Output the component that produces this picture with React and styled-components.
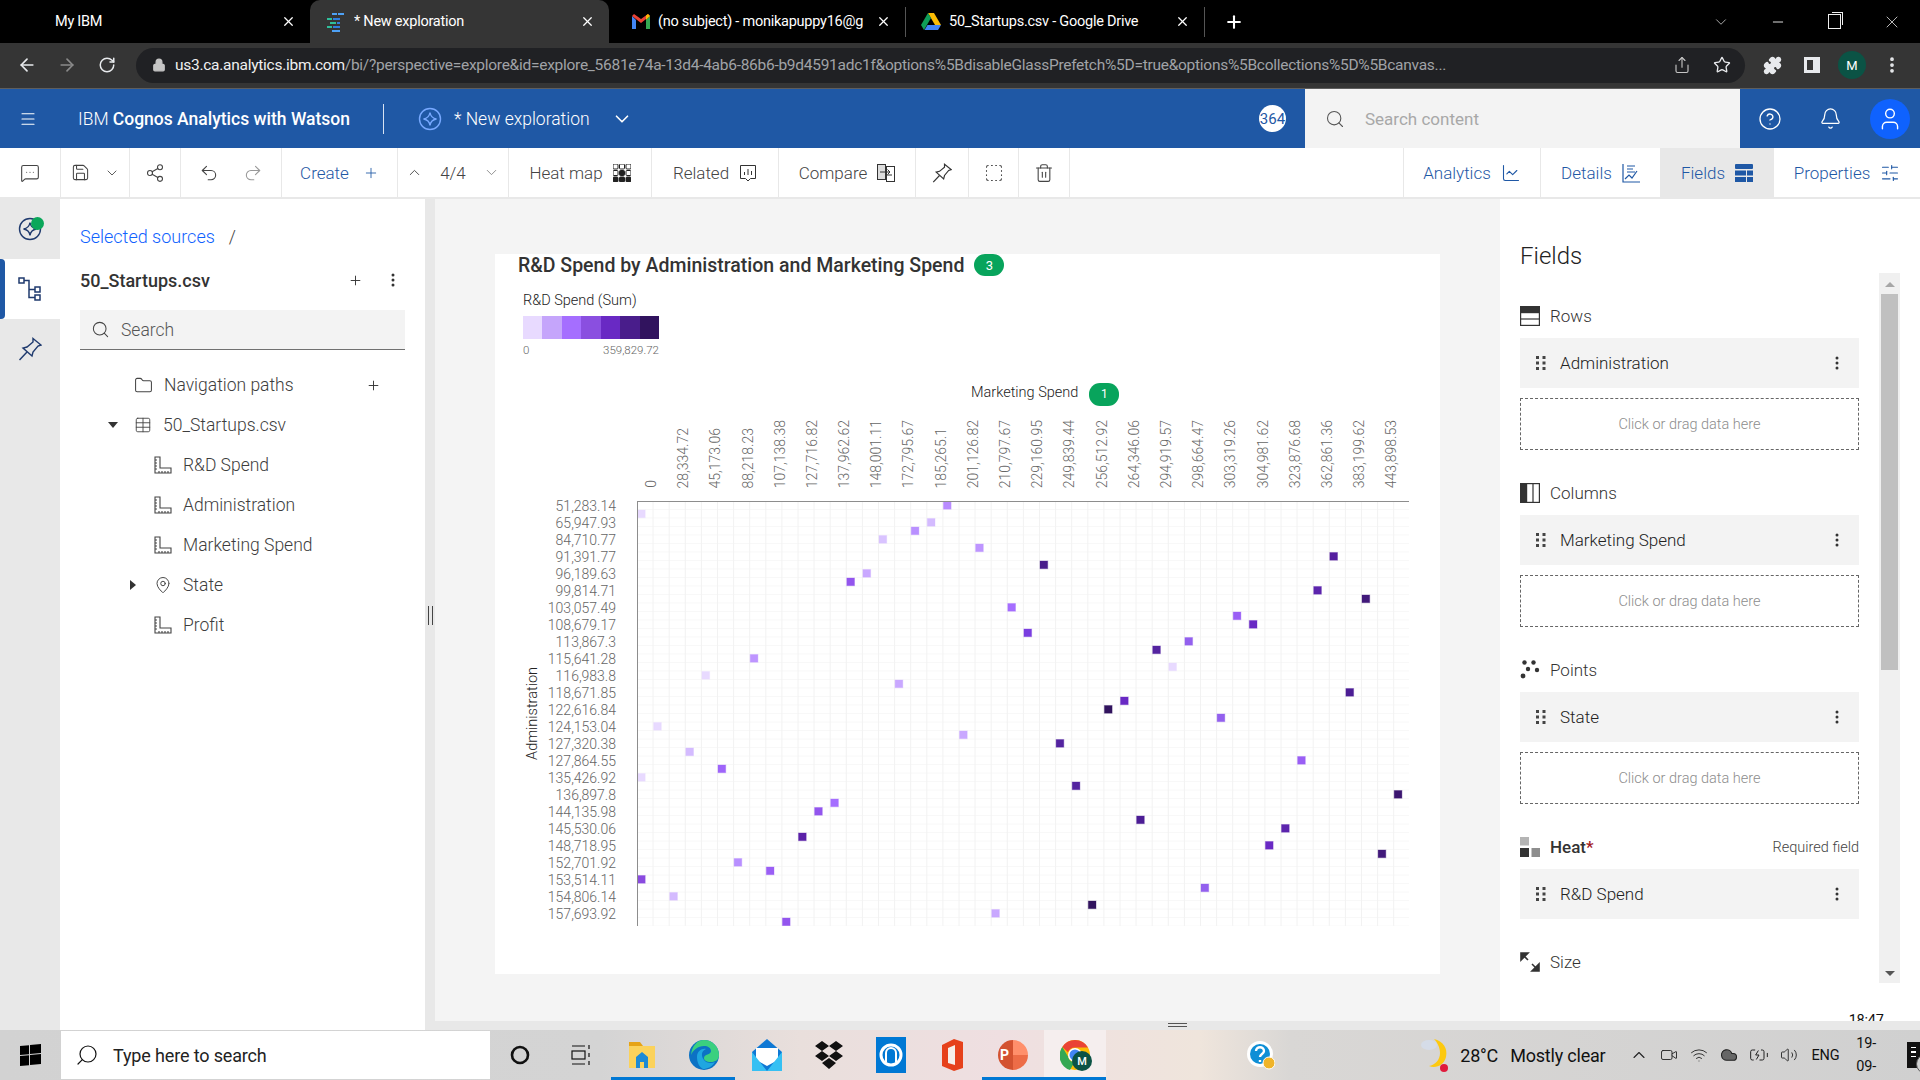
import styled, { createGlobalStyle } from "styled-components";
import {
  ArrowLeft, ArrowRight, Bell, ChartLine, ChevronDown, ChevronUp, CircleHelp, EllipsisVertical,
  Folder, Lock, MapPin, Menu, MessageSquareMore, Minus, Pin, Plus, Puzzle, Redo2, RotateCw, Save,
  Search, Share, Share2, SlidersHorizontal, SquareDashed, Star, Table, Trash2, Undo2, User, Wifi,
  Volume2, Video, Cloud, BatteryCharging, X,
} from "lucide-react";

const GlobalStyle = createGlobalStyle`
  html, body { margin: 0; padding: 0; background: #fff; }
  body { width: 1920px; height: 1080px; overflow: hidden; font-family: Roboto, "Liberation Sans", sans-serif; }
  * { box-sizing: border-box; }
`;

const Page = styled.div`
  width: 1920px;
  height: 1080px;
  display: flex;
  flex-direction: column;
`;

/* ---------- browser chrome ---------- */
const TabStrip = styled.div`
  height: 43px;
  background: #000;
  display: flex;
  align-items: center;
  color: #fff;
  font-size: 14.5px;
  letter-spacing: -0.25px;
`;
const Tab = styled.div`
  width: ${(p) => p.$w}px;
  height: ${(p) => (p.$active ? "43px" : "30px")};
  display: flex;
  align-items: center;
  padding: 0 14px 0 ${(p) => p.$pad}px;
  gap: 8px;
  background: ${(p) => (p.$active ? "#353535" : "transparent")};
  border-radius: ${(p) => (p.$active ? "10px 10px 0 0" : "0")};
  border-right: ${(p) => (p.$sep ? "1px solid #555" : "none")};
`;
const TabLabel = styled.span`
  flex: 1;
  white-space: nowrap;
  overflow: hidden;
`;
const TabPlus = styled.div`
  width: 58px;
  display: flex;
  justify-content: center;
`;
const WindowButtons = styled.div`
  margin-left: auto;
  display: flex;
  align-items: center;
  padding-right: 0;
`;
const WindowButton = styled.div`
  width: 57px;
  display: flex;
  justify-content: center;
  color: #ddd;
`;
const RestoreIcon = styled.div`
  width: 13px;
  height: 15px;
  border: 1px solid #eee;
  box-shadow: 2px -2px 0 -1px #000, 3px -3px 0 -1px #eee;
`;
const ChromeBar = styled.div`
  height: 46px;
  background: #353535;
  border-bottom: 1px solid #5e5e5e;
  display: flex;
  align-items: center;
  padding-left: 7px;
  padding-bottom: 1px;
`;
const NavSlot = styled.div`
  width: ${(p) => p.$w || 40}px;
  height: 34px;
  flex: none;
  display: flex;
  align-items: center;
  justify-content: center;
  color: ${(p) => p.$color || "#e8eaed"};
`;
const Omnibox = styled.div`
  width: 1609px;
  height: 35px;
  margin: 0 7px 0 9px;
  flex: none;
  border-radius: 18px;
  background: #202124;
  display: flex;
  align-items: center;
  padding: 0 3px 0 16px;
  color: #c6c6c6;
`;
const Url = styled.div`
  flex: 1;
  margin-left: 9px;
  white-space: nowrap;
  overflow: hidden;
  font-size: 15.5px;
  letter-spacing: -0.27px;
  color: #a0a3a7;
  span { color: #f0f0f0; }
`;
const Avatar = styled.div`
  width: 28px;
  height: 28px;
  border-radius: 50%;
  background: #0b5345;
  color: #fff;
  font-size: 13px;
  display: flex;
  align-items: center;
  justify-content: center;
`;

/* ---------- cognos header ---------- */
const AppHeader = styled.div`
  height: 59px;
  background: #1f58a5;
  color: #fff;
  display: flex;
  align-items: center;
`;
const HeaderSlot = styled.div`
  width: ${(p) => p.$w}px;
  height: 100%;
  flex: none;
  display: flex;
  align-items: center;
  justify-content: center;
`;
const AppTitle = styled.div`
  width: 305px;
  margin-left: 22px;
  flex: none;
  font-size: 17.5px;
  font-weight: 300;
  white-space: nowrap;
  b { font-weight: 500; }
`;
const HeaderDivider = styled.div`
  width: 1px;
  height: 30px;
  background: #d6e2f3;
  margin-right: 34px;
`;
const ExplorationName = styled.div`
  margin: 0 21px 0 12px;
  font-size: 17.5px;
  font-weight: 300;
  white-space: nowrap;
`;
const CountBadge = styled.div`
  width: 27px;
  height: 27px;
  margin: 0 19px 0 auto;
  border-radius: 50%;
  background: #fff;
  color: #1f58a5;
  font-size: 15px;
  overflow: hidden;
  display: flex;
  align-items: center;
  justify-content: center;
`;
const ContentSearch = styled.div`
  width: 435px;
  height: 100%;
  flex: none;
  background: #f3f3f3;
  color: #a8a8a8;
  font-size: 17px;
  display: flex;
  align-items: center;
  gap: 20px;
  padding-left: 20px;
`;
const UserCircle = styled.div`
  width: 40px;
  height: 40px;
  border-radius: 50%;
  background: #0f62fe;
  display: flex;
  align-items: center;
  justify-content: center;
`;

/* ---------- toolbar ---------- */
const Toolbar = styled.div`
  height: 51px;
  background: #fff;
  border-bottom: 2px solid #e8e8e8;
  display: flex;
  color: #444;
  font-size: 17px;
  font-weight: 300;
`;
const ToolCell = styled.div`
  width: ${(p) => p.$w}px;
  flex: none;
  display: flex;
  align-items: center;
  justify-content: ${(p) => p.$justify || "center"};
  gap: ${(p) => p.$gap ?? 10}px;
  padding: ${(p) => p.$pad || "0"};
  border-right: ${(p) => (p.$plain ? "none" : "1px solid #e8e8e8")};
  background: ${(p) => (p.$active ? "#e8e8e8" : "transparent")};
  color: ${(p) => (p.$blue ? "#1f58a5" : "inherit")};
`;
const ToolSpacer = styled.div`
  flex: 1;
  border-right: 1px solid #e8e8e8;
`;

/* ---------- main area ---------- */
const Main = styled.div`
  flex: 1;
  min-height: 0;
  display: flex;
`;
const Rail = styled.div`
  width: 60px;
  flex: none;
  background: #e8e8e8;
`;
const RailItem = styled.div`
  position: relative;
  height: 60px;
  display: flex;
  align-items: center;
  justify-content: center;
  background: ${(p) => (p.$active ? "#fff" : "transparent")};
  padding-top: ${(p) => (p.$first ? "0" : "0")};
`;
const RailMarker = styled.div`
  position: absolute;
  left: 0;
  top: 0;
  bottom: 0;
  width: 5px;
  background: #1f58a5;
  border-radius: 0 4px 4px 0;
`;
const GreenDot = styled.div`
  position: absolute;
  left: 31px;
  top: 18px;
  width: 13px;
  height: 13px;
  border-radius: 50%;
  background: #0aa75a;
`;
const SourcePanel = styled.div`
  width: 365px;
  flex: none;
  background: #fff;
  padding: 24px 20px 0;
  color: #3d3d3d;
`;
const Breadcrumb = styled.div`
  height: 26px;
  display: flex;
  align-items: center;
  gap: 14px;
  font-size: 18px;
  font-weight: 300;
  color: #0f62fe;
  span { color: #444; }
`;
const SourceHead = styled.div`
  height: 40px;
  margin-top: 11px;
  display: flex;
  align-items: center;
  font-size: 18px;
  font-weight: 500;
  color: #333;
`;
const SourceActions = styled.div`
  margin-left: auto;
  display: flex;
  align-items: center;
  gap: 28px;
  margin-right: 10px;
`;
const SourceSearch = styled.div`
  height: 40px;
  margin-top: 10px;
  width: 325px;
  background: #f3f3f3;
  border-bottom: 1px solid #707070;
  display: flex;
  align-items: center;
  gap: 11px;
  padding-left: 11px;
  font-size: 17.5px;
  font-weight: 300;
  color: #555;
`;
const Tree = styled.div`
  margin-top: 15px;
  font-size: 17.5px;
  font-weight: 300;
`;
const TreeRow = styled.div`
  height: 40px;
  display: flex;
  align-items: center;
  gap: 11px;
  padding-left: ${(p) => p.$indent}px;
`;
const Caret = styled.div`
  width: 0;
  height: 0;
  margin-left: ${(p) => p.$gap}px;
  margin-right: ${(p) => p.$after}px;
  border-style: solid;
  ${(p) =>
    p.$open
      ? "border-width: 6px 5px 0 5px; border-color: #333 transparent transparent transparent;"
      : "border-width: 5px 0 5px 6px; border-color: transparent transparent transparent #333;"}
`;
const TreeAdd = styled.div`
  margin-left: auto;
  margin-right: 24px;
  display: flex;
`;
const Gutter = styled.div`
  position: relative;
  width: 10px;
  flex: none;
  background: #e8e8e8;
`;
const VerticalGrip = styled.div`
  position: absolute;
  left: 3px;
  top: 407px;
  width: 5px;
  height: 19px;
  border-left: 1px solid #444;
  border-right: 1px solid #444;
`;
const WorkColumn = styled.div`
  flex: 1;
  min-width: 0;
  display: flex;
  flex-direction: column;
`;
const WorkRow = styled.div`
  flex: 1;
  min-height: 0;
  display: flex;
`;
const BottomBar = styled.div`
  position: relative;
  height: 9px;
  background: #e8e8e8;
`;
const HorizontalGrip = styled.div`
  position: absolute;
  left: 733px;
  top: 2px;
  width: 19px;
  height: 4px;
  border-top: 1px solid #555;
  border-bottom: 1px solid #555;
`;
const Canvas = styled.div`
  width: 1065px;
  flex: none;
  background: #f4f4f4;
  padding: 41px 0 0 60px;
`;

/* ---------- chart card ---------- */
const ChartCard = styled.div`
  width: 945px;
  height: 720px;
  background: #fff;
`;
const ChartTitle = styled.div`
  height: 22px;
  margin: 14px 0 0 23px;
  padding-top: 0;
  display: flex;
  align-items: center;
  gap: 10px;
  font-size: 19.5px;
  font-weight: 500;
  color: #333;
  white-space: nowrap;
`;
const Pill = styled.div`
  width: 30px;
  height: 22px;
  border-radius: 11px;
  background: #08a45c;
  color: #fff;
  font-size: 13px;
  font-weight: 400;
  display: flex;
  align-items: center;
  justify-content: center;
  flex: none;
`;
const Legend = styled.div`
  width: 136px;
  margin: 16px 0 0 28px;
`;
const LegendLabel = styled.div`
  height: 18px;
  line-height: 18px;
  font-size: 14.5px;
  font-weight: 300;
  color: #222;
  white-space: nowrap;
`;
const LegendBar = styled.div`
  height: 23px;
  margin-top: 6px;
  display: flex;
`;
const LegendStep = styled.div`
  flex: 1;
  background: ${(p) => p.$color};
`;
const LegendRange = styled.div`
  margin-top: 4px;
  height: 14px;
  display: flex;
  justify-content: space-between;
  font-size: 11.5px;
  font-weight: 300;
  color: #666;
`;
const AxisTitle = styled.div`
  height: 22px;
  margin: 24px 0 0 476px;
  display: flex;
  align-items: center;
  gap: 11px;
  font-size: 14.5px;
  font-weight: 300;
  color: #222;
  white-space: nowrap;
  ${Pill} { margin-top: 4px; font-size: 12px; height: 23px; }
`;
const ColumnLabels = styled.div`
  height: 85px;
  padding-left: 146.7px;
  display: flex;
  align-items: flex-end;
  margin-bottom: 13px;
`;
const ColumnLabel = styled.div`
  width: 32.2px;
  flex: none;
  padding-left: 1.3px;
  display: flex;
  justify-content: flex-start;
  span {
    writing-mode: vertical-rl;
    transform: rotate(180deg);
    width: 16px;
    line-height: 16px;
    font-size: 14px;
    font-weight: 300;
    color: #666;
    white-space: nowrap;
  }
`;
const PlotRow = styled.div`
  display: flex;
  align-items: flex-start;
  height: 425px;
`;
const SideTitle = styled.div`
  width: 18px;
  margin-left: 28px;
  height: 425px;
  display: flex;
  align-items: center;
  justify-content: center;
  span {
    writing-mode: vertical-rl;
    transform: rotate(180deg);
    font-size: 14.5px;
    font-weight: 300;
    color: #222;
    white-space: nowrap;
  }
`;
const RowLabels = styled.div`
  width: 75px;
  margin: -3.5px 20.7px 0 0;
  flex: none;
`;
const RowLabel = styled.div`
  height: 17px;
  line-height: 17px;
  text-align: right;
  font-size: 14px;
  font-weight: 300;
  color: #666;
`;
const Plot = styled.svg`
  flex: none;
  display: block;
`;

/* ---------- fields panel ---------- */
const FieldsPanel = styled.div`
  width: 420px;
  flex: none;
  background: #fff;
  padding: 40px 20px 0;
`;
const FieldsTitle = styled.div`
  height: 34px;
  line-height: 34px;
  font-size: 24px;
  font-weight: 300;
  color: #222;
`;
const FieldsBody = styled.div`
  display: flex;
  gap: 20px;
  height: 710px;
`;
const FieldsList = styled.div`
  width: 339px;
  flex: none;
  padding-top: 21px;
`;
const Section = styled.div`
  margin-bottom: 21px;
`;
const SectionHead = styled.div`
  height: 44px;
  padding-bottom: 0;
  display: flex;
  align-items: center;
  gap: 10px;
  font-size: 17px;
  font-weight: 300;
  color: #333;
  b { font-weight: 500; }
  i { font-style: normal; color: #a2191f; font-weight: 500; }
`;
const RequiredNote = styled.span`
  margin-left: auto;
  font-size: 14.5px;
  color: #444;
`;
const FieldItem = styled.div`
  height: 50px;
  background: #f3f3f3;
  display: flex;
  align-items: center;
  gap: 14px;
  padding: 0 20px 0 16px;
  font-size: 17px;
  font-weight: 300;
  color: #222;
`;
const FieldMenu = styled.div`
  margin-left: auto;
  display: flex;
`;
const DropZone = styled.div`
  height: 52px;
  margin-top: 10px;
  border: 1px dashed #666;
  display: flex;
  align-items: center;
  justify-content: center;
  font-size: 14.5px;
  font-weight: 300;
  color: #8d8d8d;
`;
const Scrollbar = styled.div`
  width: 21px;
  height: 710px;
  flex: none;
  background: #f0f0f0;
  display: flex;
  flex-direction: column;
  align-items: center;
`;
const ScrollArrow = styled.div`
  width: 0;
  height: 0;
  margin: ${(p) => (p.$up ? "9px 0 7px" : "auto 0 7px")};
  border-style: solid;
  ${(p) =>
    p.$up
      ? "border-width: 0 5px 5px 5px; border-color: transparent transparent #a6a6a6 transparent;"
      : "border-width: 5px 5px 0 5px; border-color: #555 transparent transparent transparent;"}
`;
const ScrollThumb = styled.div`
  width: 17px;
  height: 376px;
  background: #c0c0c0;
`;

/* ---------- taskbar ---------- */
const Taskbar = styled.div`
  height: 50px;
  flex: none;
  display: flex;
  align-items: center;
  color: #111;
  background: linear-gradient(90deg, #d2d2d2 0, #d4d4d4 600px, #e9dfdc 800px, #efdfe1 1000px, #efe5dc 1200px, #d9d7d5 1290px, #d0d0d0 100%);
`;
const StartSlot = styled.div`
  width: 61px;
  flex: none;
  display: flex;
  justify-content: center;
`;
const WindowsLogo = styled.div`
  display: grid;
  grid-template-columns: 9px 11px;
  grid-template-rows: 9px 10px;
  gap: 1px;
  transform: skewY(-6deg);
  div { background: #000; }
`;
const TaskSearch = styled.div`
  width: 429px;
  height: 48px;
  flex: none;
  background: #fff;
  display: flex;
  align-items: center;
  gap: 14px;
  padding-left: 14px;
  font-size: 18px;
  letter-spacing: -0.15px;
  color: #222;
`;
const TaskApps = styled.div`
  display: flex;
  height: 100%;
`;
const TaskApp = styled.div`
  width: ${(p) => p.$w || 61.5}px;
  height: 50px;
  flex: none;
  display: flex;
  align-items: center;
  justify-content: center;
  background: ${(p) => (p.$active ? "#f5eeee" : "transparent")};
  box-shadow: ${(p) => (p.$open ? "inset 0 -3px 0 #0078d4" : "none")};
  position: relative;
`;
const PptBadge = styled.div`
  width: 30px;
  height: 30px;
  border-radius: 50%;
  background: conic-gradient(#ff8f6b 0 25%, #ed6c47 25% 50%, #d35230 50% 100%);
  color: #fff;
  font-weight: 700;
  font-size: 14px;
  display: flex;
  align-items: center;
  padding-left: 2px;
`;
const ChromeBadge = styled.div`
  position: absolute;
  left: 28px;
  top: 21px;
  width: 20px;
  height: 20px;
  border-radius: 50%;
  background: #0b5345;
  color: #fff;
  font-size: 11px;
  font-weight: 500;
  display: flex;
  align-items: center;
  justify-content: center;
`;
const TraySpace = styled.div`
  display: flex;
  align-items: center;
  height: 100%;
  font-size: 18px;
  letter-spacing: -0.2px;
  margin-left: 141px;
`;
const WeatherText = styled.div`
  margin-left: 10px;
  white-space: nowrap;
  display: flex;
  gap: 12px;
`;
const TrayIcons = styled.div`
  display: flex;
  align-items: center;
  margin-left: 18px;
`;
const TrayIcon = styled.div`
  width: 30px;
  display: flex;
  justify-content: center;
  color: #222;
`;
const Lang = styled.div`
  margin-left: 8px;
  font-size: 14.5px;
  letter-spacing: -0.2px;
`;
const Clock = styled.div`
  width: 90px;
  margin-left: 8px;
  text-align: center;
  font-size: 14.5px;
  line-height: 23px;
  letter-spacing: -0.2px;
`;
const Notify = styled.div`
  position: relative;
  margin-left: 22px;
  width: 20px;
  height: 26px;
  background: #111;
  display: flex;
  flex-direction: column;
  justify-content: center;
  gap: 3px;
  padding: 0 4px 6px;
  i { display: block; height: 1.5px; background: #fff; }
`;
const NotifyCount = styled.div`
  position: absolute;
  left: 9px;
  top: 12px;
  width: 20px;
  height: 20px;
  border-radius: 50%;
  background: #d2d2d2;
  border: 1px solid #555;
  font-size: 12.5px;
  display: flex;
  align-items: center;
  justify-content: center;
`;

/* ---------- small drawn icons ---------- */
const NAVY = "#1f3a6e";

const CognosFavicon = () => (
  <svg width="20" height="20" viewBox="0 0 20 20">
    <rect x="6" y="1" width="5" height="2" fill="#4ea1f5" />
    <rect x="12" y="1" width="6" height="2" fill="#4ea1f5" />
    <rect x="1" y="6" width="5" height="2" fill="#2fbf9b" />
    <rect x="7" y="6" width="7" height="2" fill="#2f7fe0" />
    <rect x="4" y="10" width="6" height="2" fill="#2fbf9b" />
    <rect x="11" y="10" width="3" height="2" fill="#2f7fe0" />
    <rect x="1" y="14" width="5" height="2" fill="#2fbf9b" />
    <rect x="7" y="14" width="7" height="2" fill="#2f7fe0" />
    <rect x="6" y="18" width="8" height="2" fill="#4ea1f5" />
  </svg>
);
const GmailIcon = () => (
  <svg width="18" height="15" viewBox="0 0 18 15">
    <path d="M0 2v13h4V6z" fill="#4285f4" />
    <path d="M14 6v9h4V2z" fill="#34a853" />
    <path d="M0 2l9 7 9-7-2-2-7 5-7-5z" fill="#ea4335" />
    <path d="M14 6l4-4-2-2-2 1.5z" fill="#fbbc04" />
  </svg>
);
const DriveIcon = () => (
  <svg width="20" height="18" viewBox="0 0 20 18">
    <path d="M7 0h6l7 12h-6z" fill="#fbbc04" />
    <path d="M7 0L0 12l3 5 7-12z" fill="#0f9d58" />
    <path d="M6.500 12H20l-3 5H3.500z" fill="#4285f4" />
  </svg>
);
const StarLogo = ({ color, size = 24 }) => (
  <svg width={size} height={size} viewBox="0 0 24 24" fill="none" stroke={color} strokeWidth="1.4">
    <circle cx="12" cy="12" r="10.5" />
    <path d="M12 5.500c.6 4 2.500 5.900 6.500 6.500-4 .6-5.900 2.500-6.500 6.500-.6-4-2.500-5.900-6.500-6.500 4-.6 5.900-2.500 6.500-6.500z" />
  </svg>
);
const HeatGridIcon = () => (
  <svg width="18" height="18" viewBox="0 0 18 18">
    {[0, 1, 2].flatMap((r) =>
      [0, 1, 2].map((c) => (
        <rect key={`${r}${c}`} x={c * 6.5} y={r * 6.5} width="5" height="5" rx="1" fill={r === 2 || (r === 1 && c === 1) ? "#222" : "#fff"} stroke="#222" />
      ))
    )}
  </svg>
);
const RelatedIcon = () => (
  <svg width="18" height="18" viewBox="0 0 18 18" fill="none" stroke="#333">
    <path d="M1.500 1.500h15v13h-5l-2.500 2.500-2.500-2.500h-5z" />
    <path d="M5.500 11V8M9 11V5M12.500 11V7" />
  </svg>
);
const CompareIcon = () => (
  <svg width="18" height="20" viewBox="0 0 18 20" fill="none" stroke="#333">
    <rect x="0.500" y="1.500" width="8" height="15" fill="#ddd" />
    <rect x="9.500" y="3.500" width="8" height="15" />
    <path d="M3 9h10M10.500 6.500L13 9l-2.500 2.500M15 12H8" />
  </svg>
);
const DetailsIcon = () => (
  <svg width="18" height="20" viewBox="0 0 18 20" fill="none" stroke="#1f58a5" strokeWidth="1.2">
    <path d="M1 1v18h17" />
    <path d="M5 3h8M5 6h6M5 9h8M3 16l4-4 3 3 5-7" />
  </svg>
);
const FieldsIcon = () => (
  <svg width="18" height="18" viewBox="0 0 18 18" fill="#1f58a5">
    <rect x="0" y="0" width="18" height="5" rx="1" />
    <rect x="0" y="6.500" width="11" height="5" />
    <rect x="12" y="6.500" width="6" height="5" />
    <rect x="0" y="13" width="11" height="5" />
    <rect x="12" y="13" width="6" height="5" />
  </svg>
);
const TreeIcon = () => (
  <svg width="24" height="24" viewBox="0 0 24 24" fill="none" stroke={NAVY} strokeWidth="1.5">
    <rect x="1" y="1" width="5" height="5" />
    <rect x="17" y="10" width="5" height="5" />
    <rect x="17" y="18" width="5" height="5" />
    <path d="M6 3.500h5v17h6M11 12.500h6" />
  </svg>
);
const PinIcon = ({ color = NAVY, size = 24 }) => (
  <svg width={size} height={size} viewBox="0 0 24 24" fill="none" stroke={color} strokeWidth="1.4">
    <path d="M15 1.500L23 8l-3 1-5 6-1 4-9-8 4-1 6-5z" />
    <path d="M9 15L1.500 23" />
  </svg>
);
const MeasureIcon = () => (
  <svg width="18" height="18" viewBox="0 0 18 18" fill="none" stroke="#444" strokeWidth="1.1">
    <path d="M1 1h5v11h11v5H1z" />
    <path d="M1 4h2M1 7h2M1 10h2M1 13h2M5 17v-2M8 17v-2M11 17v-2M14 17v-2" />
  </svg>
);
const RowsIcon = () => (
  <svg width="20" height="20" viewBox="0 0 20 20" fill="none" stroke="#333" strokeWidth="1.2">
    <rect x="0.600" y="0.600" width="18.800" height="18.800" />
    <rect x="0.600" y="0.600" width="18.800" height="6" fill="#333" />
    <path d="M1 13h18" />
  </svg>
);
const ColumnsIcon = () => (
  <svg width="20" height="20" viewBox="0 0 20 20" fill="none" stroke="#333" strokeWidth="1.2">
    <rect x="0.600" y="0.600" width="18.800" height="18.800" />
    <rect x="0.600" y="0.600" width="6" height="18.800" fill="#333" />
    <path d="M13 1v18" />
  </svg>
);
const PointsIcon = () => (
  <svg width="20" height="20" viewBox="0 0 20 20" fill="#333">
    <circle cx="4.500" cy="2.500" r="2.200" /><circle cx="13.500" cy="2.500" r="2.200" />
    <circle cx="8" cy="9" r="2.200" /><circle cx="17" cy="10" r="2.200" />
    <circle cx="3" cy="16" r="2.400" />
  </svg>
);
const HeatIcon = () => (
  <svg width="20" height="20" viewBox="0 0 20 20">
    <rect x="0" y="0" width="9" height="8.500" fill="#b4b4b4" />
    <rect x="0" y="11" width="9" height="9" fill="#333" />
    <rect x="11.500" y="11" width="8.500" height="9" fill="#8d8d8d" />
  </svg>
);
const SizeIcon = () => (
  <svg width="20" height="20" viewBox="0 0 20 20" fill="none" stroke="#333" strokeWidth="1.6">
    <path d="M1 8V1h7L1 8zM3 3l5 5M12 12l6 6M19 12v7h-7z" fill="#333" />
  </svg>
);
const DragDots = () => (
  <svg width="10" height="14" viewBox="0 0 10 14" fill="#444">
    {[1.500, 7, 12.500].flatMap((y) => [1.500, 8].map((x) => <rect key={`${x}${y}`} x={x - 1.500} y={y - 1.500} width="3" height="3" />))}
  </svg>
);
const Kebab = () => (
  <svg width="4" height="14" viewBox="0 0 4 14" fill="#333">
    <circle cx="2" cy="2" r="1.500" /><circle cx="2" cy="7" r="1.500" /><circle cx="2" cy="12" r="1.500" />
  </svg>
);
const TaskViewIcon = () => (
  <svg width="20" height="22" viewBox="0 0 20 22" fill="none" stroke="#111" strokeWidth="1.200">
    <rect x="1" y="7" width="13" height="8" />
    <path d="M1 2h13M1 20h13M18 1v4M18 9v4M18 17v4" />
  </svg>
);
const ExplorerIcon = () => (
  <svg width="28" height="28" viewBox="0 0 28 28">
    <path d="M1 1h11l3 4H1z" fill="#e6a316" />
    <rect x="1" y="5" width="26" height="22" fill="#fbd25b" />
    <path d="M8 27V16l6-5 6 5v11h-4v-6h-4v6z" fill="#1d8ad6" />
  </svg>
);
const EdgeIcon = () => (
  <svg width="30" height="32" viewBox="0 0 30 32">
    <circle cx="15" cy="16" r="15" fill="#0c72c4" />
    <path d="M15 1a15 15 0 0 1 15 15c0 5-4 7-8 7-5 0-7-2-7-4 0-4 7-3 7-7 0-3-3-5-7-5-6 0-11 4-13 9C3 7 8 1 15 1z" fill="#3bd07f" />
    <path d="M8 18c0-6 5-9 9-8-5 2-5 7-2 11 2 3 7 4 11 2-3 5-8 7-12 7-4-2-6-7-6-12z" fill="#1fa6e0" />
  </svg>
);
const MailIcon = () => (
  <svg width="30" height="34" viewBox="0 0 30 34">
    <path d="M15 1l15 13v19H0V14z" fill="#0f78d4" />
    <path d="M4 10h22v12l-11 6-11-6z" fill="#fff" />
    <path d="M0 14l15 19H0zM30 14L15 33h15z" fill="#36c0f3" />
  </svg>
);
const DropboxIcon = () => (
  <svg width="30" height="30" viewBox="0 0 30 30" fill="#111">
    <path d="M8 1l7 5-7 5-7-5zM22 1l7 5-7 5-7-5zM8 11l7 5-7 5-7-5zM22 11l7 5-7 5-7-5zM15 18l7 5-7 6-7-6z" />
  </svg>
);
const BlueSquareIcon = () => (
  <svg width="30" height="36" viewBox="0 0 30 36">
    <rect width="30" height="36" fill="#0078d4" />
    <circle cx="15" cy="18" r="10" fill="none" stroke="#fff" strokeWidth="3" />
    <path d="M10 25v-9a5 5 0 0 1 10 0v9" fill="none" stroke="#fff" strokeWidth="2" />
  </svg>
);
const OfficeIcon = () => (
  <svg width="24" height="34" viewBox="0 0 24 34">
    <path d="M14 1l9 3v26l-9 3L2 28V7z" fill="#e6411b" />
    <path d="M8 10l7-3v20l-7-2z" fill="#f6efe9" />
  </svg>
);
const ChromeIcon = () => (
  <svg width="30" height="30" viewBox="0 0 30 30">
    <circle cx="15" cy="15" r="15" fill="#fbbc04" />
    <path d="M15 0a15 15 0 0 1 13 7.500H15a7.500 7.500 0 0 0-7 4.800L2.300 7A15 15 0 0 1 15 0z" fill="#ea4335" />
    <path d="M2.300 7l6 10a7.500 7.500 0 0 0 6 5.500L10 30A15 15 0 0 1 2.300 7z" fill="#34a853" />
    <circle cx="15" cy="15" r="7" fill="#fff" /><circle cx="15" cy="15" r="5.500" fill="#4285f4" />
  </svg>
);
const HelpBadgeIcon = () => (
  <svg width="28" height="32" viewBox="0 0 28 32">
    <circle cx="13" cy="15" r="13" fill="#fff" />
    <circle cx="13" cy="15" r="10" fill="#0f8fd6" />
    <path d="M9 12c0-5 8-5 8 0 0 3-4 3-4 6M13 21v2" fill="none" stroke="#fff" strokeWidth="2.400" />
    <circle cx="22" cy="24" r="6" fill="#f0b429" stroke="#fff" />
  </svg>
);
const WeatherIcon = () => (
  <svg width="30" height="38" viewBox="0 0 30 38">
    <path d="M14 3c9 2 14 9 12 18-2 8-10 12-17 9 6-1 11-6 11-13 0-6-3-11-6-14z" fill="#fdc90f" />
    <ellipse cx="9" cy="9" rx="8" ry="5" fill="#d5dce8" />
    <circle cx="24" cy="32" r="4" fill="#e01b3c" />
  </svg>
);

/* ---------- data ---------- */
const LEGEND = ["#e8daff", "#c5a5fb", "#a56eff", "#8a4fe0", "#6929c4", "#491d8b", "#31135e"];

const COLUMN_LABELS = [
  "0", "28,334.72", "45,173.06", "88,218.23", "107,138.38", "127,716.82", "137,962.62", "148,001.11",
  "172,795.67", "185,265.1", "201,126.82", "210,797.67", "229,160.95", "249,839.44", "256,512.92",
  "264,346.06", "294,919.57", "298,664.47", "303,319.26", "304,981.62", "323,876.68", "362,861.36",
  "383,199.62", "443,898.53",
];
const ROW_LABELS = [
  "51,283.14", "65,947.93", "84,710.77", "91,391.77", "96,189.63", "99,814.71", "103,057.49", "108,679.17",
  "113,867.3", "115,641.28", "116,983.8", "118,671.85", "122,616.84", "124,153.04", "127,320.38",
  "127,864.55", "135,426.92", "136,897.8", "144,135.98", "145,530.06", "148,718.95", "152,701.92",
  "153,514.11", "154,806.14", "157,693.92",
];
// col, row, colour
const CELLS = [
  [0, 1, "#e8daff"], [19, 0, "#b98cff"], [18, 2, "#d4bbff"], [17, 3, "#b990ff"], [15, 4, "#d9c3ff"],
  [21, 5, "#be95ff"], [14, 8, "#c9a8ff"], [13, 9, "#9355ee"], [23, 12, "#a56eff"], [7, 18, "#be95ff"],
  [4, 20, "#e8daff"], [16, 21, "#c9a8ff"], [1, 26, "#e8daff"], [20, 27, "#c9a8ff"], [3, 29, "#d4bbff"],
  [5, 31, "#9f65fa"], [0, 32, "#e8daff"], [12, 35, "#a56eff"], [11, 36, "#9355ee"], [10, 39, "#5b21a8"],
  [6, 42, "#b88fff"], [8, 43, "#9a5ff5"], [0, 44, "#8a4be0"], [2, 46, "#d4bbff"], [22, 48, "#c9a8ff"],
  [9, 49, "#9355ee"], [25, 7, "#491d8b"], [24, 15, "#7a3ee0"], [43, 6, "#551f9f"], [42, 10, "#5c25ad"],
  [45, 11, "#41197a"], [37, 13, "#9a5ff5"], [38, 14, "#6929c4"], [34, 16, "#9360ee"], [32, 17, "#5424a0"],
  [33, 19, "#e8daff"], [44, 22, "#4c1d95"], [30, 23, "#6929c4"], [29, 24, "#31135e"], [36, 25, "#9360ee"],
  [26, 28, "#5424a0"], [41, 30, "#9a5ff5"], [27, 33, "#5424a0"], [47, 34, "#3b1570"], [31, 37, "#4c1d95"],
  [40, 38, "#5c25ad"], [39, 40, "#6929c4"], [46, 41, "#41197a"], [35, 45, "#9360ee"], [28, 47, "#31135e"],
];
const CELL_W = 16.1;
const CELL_H = 8.5;
const PLOT_W = 772.8;
const PLOT_H = 425;

const HeatPlot = () => (
  <Plot width={PLOT_W} height={PLOT_H} viewBox={`0 0 ${PLOT_W} ${PLOT_H}`}>
    {Array.from({ length: 50 }, (_, i) => (
      <line key={i} x1="0" x2={PLOT_W} y1={(i + 1) * CELL_H} y2={(i + 1) * CELL_H} stroke="#f8f8f8" />
    ))}
    {Array.from({ length: 48 }, (_, i) => (
      <line key={i} x1={(i + 1) * CELL_W} x2={(i + 1) * CELL_W} y1="0" y2={PLOT_H} stroke="#f2f2f2" />
    ))}
    {CELLS.map(([c, r, color]) => (
      <rect key={`${c}-${r}`} x={c * CELL_W + 0.5} y={r * CELL_H + 0.5} width="7.700" height="7.700" fill={color} stroke={color} strokeOpacity="0.35" />
    ))}
    <line x1="0" x2={PLOT_W} y1="0.500" y2="0.500" stroke="#8d8d8d" />
    <line x1="0.500" x2="0.500" y1="0" y2={PLOT_H} stroke="#8d8d8d" />
  </Plot>
);

const FieldRow = ({ name }) => (
  <FieldItem>
    <DragDots />
    {name}
    <FieldMenu><Kebab /></FieldMenu>
  </FieldItem>
);

const ic = { strokeWidth: 1.3 };

export default function App() {
  return (
    <Page>
      <GlobalStyle />
      <TabStrip>
        <Tab $w={310} $pad={55}>
          <TabLabel>My IBM</TabLabel>
          <X size={15} color="#fff" strokeWidth={2} />
        </Tab>
        <Tab $w={299} $pad={16} $active>
          <CognosFavicon />
          <TabLabel>* New exploration</TabLabel>
          <X size={15} color="#fff" strokeWidth={2} />
        </Tab>
        <Tab $w={297} $pad={23} $sep>
          <GmailIcon />
          <TabLabel>(no subject) - monikapuppy16@g</TabLabel>
          <X size={15} color="#fff" strokeWidth={2} />
        </Tab>
        <Tab $w={299} $pad={15} $sep>
          <DriveIcon />
          <TabLabel>50_Startups.csv - Google Drive</TabLabel>
          <X size={15} color="#fff" strokeWidth={2} />
        </Tab>
        <TabPlus><Plus size={20} color="#fff" strokeWidth={2.5} /></TabPlus>
        <WindowButtons>
          <WindowButton><ChevronDown size={18} strokeWidth={1} /></WindowButton>
          <WindowButton><Minus size={16} strokeWidth={1.5} /></WindowButton>
          <WindowButton><RestoreIcon /></WindowButton>
          <WindowButton><X size={20} strokeWidth={1} /></WindowButton>
        </WindowButtons>
      </TabStrip>

      <ChromeBar>
        <NavSlot><ArrowLeft size={20} strokeWidth={2} /></NavSlot>
        <NavSlot $color="#8a8a8a"><ArrowRight size={20} strokeWidth={2} /></NavSlot>
        <NavSlot><RotateCw size={18} strokeWidth={2} /></NavSlot>
        <Omnibox>
          <Lock size={14} fill="#c6c6c6" color="#c6c6c6" />
          <Url>
            <span>us3.ca.analytics.ibm.com</span>/bi/?perspective=explore&amp;id=explore_5681e74a-13d4-4ab6-86b6-b9d4591adc1f&amp;options%5BdisableGlassPrefetch%5D=true&amp;options%5Bcollections%5D%5Bcanvas...
          </Url>
          <NavSlot $color="#c6c6c6"><Share size={18} strokeWidth={1.5} /></NavSlot>
          <NavSlot $color="#e8eaed"><Star size={18} strokeWidth={1.8} /></NavSlot>
        </Omnibox>
        <NavSlot><Puzzle size={19} fill="#e8eaed" /></NavSlot>
        <NavSlot><svg width="18" height="18" viewBox="0 0 18 18"><path d="M1 1h16v16H1z" fill="#e8eaed" /><path d="M4 4h6v10H4z" fill="#353535" /></svg></NavSlot>
        <NavSlot><Avatar>M</Avatar></NavSlot>
        <NavSlot><EllipsisVertical size={20} strokeWidth={2.5} /></NavSlot>
      </ChromeBar>

      <AppHeader>
        <HeaderSlot $w={56}><Menu size={18} color="#fff" strokeWidth={1.5} /></HeaderSlot>
        <AppTitle>IBM <b>Cognos Analytics with Watson</b></AppTitle>
        <HeaderDivider />
        <StarLogo color="#78a9ff" />
        <ExplorationName>* New exploration</ExplorationName>
        <ChevronDown size={22} color="#fff" strokeWidth={1.8} />
        <CountBadge>364</CountBadge>
        <ContentSearch>
          <Search size={20} color="#555" strokeWidth={1.3} />
          Search content
        </ContentSearch>
        <HeaderSlot $w={60}><CircleHelp size={24} color="#fff" {...ic} /></HeaderSlot>
        <HeaderSlot $w={60}><Bell size={23} color="#fff" {...ic} /></HeaderSlot>
        <HeaderSlot $w={60}><UserCircle><User size={26} color="#fff" {...ic} /></UserCircle></HeaderSlot>
      </AppHeader>

      <Toolbar>
        <ToolCell $w={61}><MessageSquareMore size={20} {...ic} /></ToolCell>
        <ToolCell $w={69} $gap={14}><Save size={19} {...ic} /><ChevronDown size={16} {...ic} /></ToolCell>
        <ToolCell $w={51}><Share2 size={20} {...ic} /></ToolCell>
        <ToolCell $w={101} $gap={24}><Undo2 size={20} {...ic} /><Redo2 size={20} color="#999" {...ic} /></ToolCell>
        <ToolCell $w={116} $gap={14} $blue>Create<Plus size={16} color="#1f58a5" {...ic} /></ToolCell>
        <ToolCell $w={111} $justify="space-between" $pad="0 8px 0 8px">
          <ChevronUp size={17} {...ic} />4/4<ChevronDown size={17} color="#888" {...ic} />
        </ToolCell>
        <ToolCell $w={143}>Heat map<HeatGridIcon /></ToolCell>
        <ToolCell $w={127}>Related<RelatedIcon /></ToolCell>
        <ToolCell $w={137}>Compare<CompareIcon /></ToolCell>
        <ToolCell $w={53}><PinIcon color="#333" size={20} /></ToolCell>
        <ToolCell $w={50}><SquareDashed size={20} {...ic} /></ToolCell>
        <ToolCell $w={51}><Trash2 size={20} {...ic} /></ToolCell>
        <ToolSpacer />
        <ToolCell $w={137} $blue>Analytics<ChartLine size={20} color="#1f58a5" {...ic} /></ToolCell>
        <ToolCell $w={120} $blue>Details<DetailsIcon /></ToolCell>
        <ToolCell $w={113} $blue $active>Fields<FieldsIcon /></ToolCell>
        <ToolCell $w={146} $blue $plain>Properties<SlidersHorizontal size={20} color="#1f58a5" {...ic} /></ToolCell>
      </Toolbar>

      <Main>
        <Rail>
          <RailItem $first><StarLogo color={NAVY} /><GreenDot /></RailItem>
          <RailItem $active><RailMarker /><TreeIcon /></RailItem>
          <RailItem><PinIcon /></RailItem>
        </Rail>

        <SourcePanel>
          <Breadcrumb>Selected sources <span>/</span></Breadcrumb>
          <SourceHead>
            50_Startups.csv
            <SourceActions><Plus size={15} color="#333" strokeWidth={1.5} /><Kebab /></SourceActions>
          </SourceHead>
          <SourceSearch><Search size={19} color="#444" {...ic} />Search</SourceSearch>
          <Tree>
            <TreeRow $indent={54}>
              <Folder size={19} color="#444" {...ic} />Navigation paths
              <TreeAdd><Plus size={15} color="#333" strokeWidth={1.5} /></TreeAdd>
            </TreeRow>
            <TreeRow $indent={28}>
              <Caret $open $gap={0} $after={5} />
              <Table size={18} color="#444" strokeWidth={1.2} />50_Startups.csv
            </TreeRow>
            <TreeRow $indent={74}><MeasureIcon />R&amp;D Spend</TreeRow>
            <TreeRow $indent={74}><MeasureIcon />Administration</TreeRow>
            <TreeRow $indent={74}><MeasureIcon />Marketing Spend</TreeRow>
            <TreeRow $indent={50}>
              <Caret $gap={0} $after={7} />
              <MapPin size={18} color="#444" {...ic} />State
            </TreeRow>
            <TreeRow $indent={74}><MeasureIcon />Profit</TreeRow>
          </Tree>
        </SourcePanel>

        <Gutter><VerticalGrip /></Gutter>

        <WorkColumn>
          <WorkRow>
            <Canvas>
              <ChartCard>
                <ChartTitle>
                  R&amp;D Spend by Administration and Marketing Spend
                  <Pill>3</Pill>
                </ChartTitle>
                <Legend>
                  <LegendLabel>R&amp;D Spend (Sum)</LegendLabel>
                  <LegendBar>
                    {LEGEND.map((c) => <LegendStep key={c} $color={c} />)}
                  </LegendBar>
                  <LegendRange><span>0</span><span>359,829.72</span></LegendRange>
                </Legend>
                <AxisTitle>Marketing Spend<Pill>1</Pill></AxisTitle>
                <ColumnLabels>
                  {COLUMN_LABELS.map((l) => <ColumnLabel key={l}><span>{l}</span></ColumnLabel>)}
                </ColumnLabels>
                <PlotRow>
                  <SideTitle><span>Administration</span></SideTitle>
                  <RowLabels>
                    {ROW_LABELS.map((l) => <RowLabel key={l}>{l}</RowLabel>)}
                  </RowLabels>
                  <HeatPlot />
                </PlotRow>
              </ChartCard>
            </Canvas>

            <FieldsPanel>
              <FieldsTitle>Fields</FieldsTitle>
              <FieldsBody>
                <FieldsList>
                  <Section>
                    <SectionHead><RowsIcon />Rows</SectionHead>
                    <FieldRow name="Administration" />
                    <DropZone>Click or drag data here</DropZone>
                  </Section>
                  <Section>
                    <SectionHead><ColumnsIcon />Columns</SectionHead>
                    <FieldRow name="Marketing Spend" />
                    <DropZone>Click or drag data here</DropZone>
                  </Section>
                  <Section>
                    <SectionHead><PointsIcon />Points</SectionHead>
                    <FieldRow name="State" />
                    <DropZone>Click or drag data here</DropZone>
                  </Section>
                  <Section>
                    <SectionHead>
                      <HeatIcon /><span><b>Heat</b><i>*</i></span>
                      <RequiredNote>Required field</RequiredNote>
                    </SectionHead>
                    <FieldRow name="R&D Spend" />
                  </Section>
                  <Section>
                    <SectionHead><SizeIcon />Size</SectionHead>
                  </Section>
                </FieldsList>
                <Scrollbar>
                  <ScrollArrow $up />
                  <ScrollThumb />
                  <ScrollArrow />
                </Scrollbar>
              </FieldsBody>
            </FieldsPanel>
          </WorkRow>
          <BottomBar><HorizontalGrip /></BottomBar>
        </WorkColumn>
      </Main>

      <Taskbar>
        <StartSlot>
          <WindowsLogo><div /><div /><div /><div /></WindowsLogo>
        </StartSlot>
        <TaskSearch>
          <Search size={24} color="#111" strokeWidth={1.2} transform="scale(-1,1)" />
          Type here to search
        </TaskSearch>
        <TaskApps>
          <TaskApp $w={60}><svg width="20" height="20" viewBox="0 0 20 20"><circle cx="10" cy="10" r="8" fill="none" stroke="#111" strokeWidth="2.600" /></svg></TaskApp>
          <TaskApp $w={61}><TaskViewIcon /></TaskApp>
          <TaskApp $w={62} $open><ExplorerIcon /></TaskApp>
          <TaskApp $w={62} $open><EdgeIcon /></TaskApp>
          <TaskApp $w={63}><MailIcon /></TaskApp>
          <TaskApp $w={62}><DropboxIcon /></TaskApp>
          <TaskApp $w={62}><BlueSquareIcon /></TaskApp>
          <TaskApp $w={60}><OfficeIcon /></TaskApp>
          <TaskApp $w={62} $open><PptBadge>P</PptBadge></TaskApp>
          <TaskApp $w={62} $active $open><ChromeIcon /><ChromeBadge>M</ChromeBadge></TaskApp>
        </TaskApps>
        <TraySpace>
          <HelpBadgeIcon />
          <span>&nbsp;</span>
        </TraySpace>
        <TraySpace>
          <WeatherIcon />
          <WeatherText><span>28°C</span><span>Mostly clear</span></WeatherText>
        </TraySpace>
        <TrayIcons>
          <TrayIcon><ChevronUp size={20} strokeWidth={1.3} /></TrayIcon>
          <TrayIcon><Video size={18} strokeWidth={1.2} /></TrayIcon>
          <TrayIcon><Wifi size={18} strokeWidth={1.2} /></TrayIcon>
          <TrayIcon><Cloud size={18} strokeWidth={1.5} fill="#666" /></TrayIcon>
          <TrayIcon><BatteryCharging size={20} strokeWidth={1.2} /></TrayIcon>
          <TrayIcon><Volume2 size={18} strokeWidth={1.2} /></TrayIcon>
        </TrayIcons>
        <Lang>ENG</Lang>
        <Clock>18:47<br />19-09-2022</Clock>
        <Notify><i /><i /><i /><NotifyCount>3</NotifyCount></Notify>
      </Taskbar>
    </Page>
  );
}
